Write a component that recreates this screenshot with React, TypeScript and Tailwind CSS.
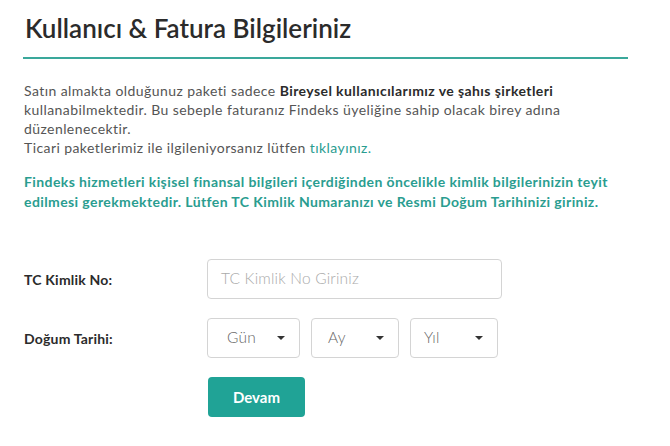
import React from "react";

const teal = "text-[#2a9d90]";

const SelectBox = ({ label, width, pl }: { label: string; width: string; pl: string }) => (
  <div
    className={`${width} ${pl} h-10 flex items-center justify-between pr-[14px] border border-[#d4d4d4] rounded-[4px] bg-white`}
  >
    <span className="text-[15.5px] text-[#666] font-light tracking-[0.3px]">{label}</span>
    <svg width="8" height="4" viewBox="0 0 8 4">
      <path d="M0 0h8L4 4z" fill="#333" />
    </svg>
  </div>
);

export default function App() {
  return (
    <div
      className="w-[670px] h-[446px] bg-white pt-[13px] pl-[23px]"
      style={{ fontFamily: "Lato, 'Noto Sans', sans-serif" }}
    >
      <h1 className="text-[26px] leading-[30px] font-semibold text-[#2b2b2b] pl-[2px]">
        Kullanıcı &amp; Fatura Bilgileriniz
      </h1>
      <div className="w-[605px] h-[2px] bg-[#3aa89b] mt-[14px]" />

      <div className="pl-[1px] w-[620px] mt-[22px] text-[14px] leading-[19px] tracking-[0.42px] text-[#555]">
        <p>
          Satın almakta olduğunuz paketi sadece{" "}
          <b className="text-[#2b2b2b]">Bireysel kullanıcılarımız ve şahıs şirketleri</b>{" "}
          kullanabilmektedir. Bu sebeple faturanız Findeks üyeliğine sahip olacak birey adına
          düzenlenecektir.
        </p>
        <p>
          Ticari paketlerimiz ile ilgileniyorsanız lütfen{" "}
          <a className={teal}>tıklayınız.</a>
        </p>
        <p className={`${teal} font-bold leading-[20px] mt-[15px] tracking-[0.4px]`}>
          Findeks hizmetleri kişisel finansal bilgileri içerdiğinden öncelikle kimlik bilgilerinizin
          teyit edilmesi gerekmektedir. Lütfen TC Kimlik Numaranızı ve Resmi Doğum Tarihinizi
          giriniz.
        </p>
      </div>

      <div className="pl-[1px] mt-[47px] flex flex-col gap-[19px]">
        <div className="flex items-center">
          <label className="w-[183px] text-[14px] font-bold text-[#2b2b2b] tracking-[0.2px]">
            TC Kimlik No:
          </label>
          <div className="w-[295px] h-10 border border-[#d4d4d4] rounded-[4px] flex items-center pl-[13px]">
            <span className="text-[15.5px] text-[#aaa] font-light tracking-[0.2px]">
              TC Kimlik No Giriniz
            </span>
          </div>
        </div>
        <div className="flex items-center">
          <label className="w-[183px] text-[14px] font-bold text-[#2b2b2b] tracking-[0.2px]">
            Doğum Tarihi:
          </label>
          <div className="flex gap-[11px]">
            <SelectBox label="Gün" width="w-[93px]" pl="pl-[19px]" />
            <SelectBox label="Ay" width="w-[88px]" pl="pl-[16px]" />
            <SelectBox label="Yıl" width="w-[88px]" pl="pl-[13px]" />
          </div>
        </div>
        <div className="pl-[184px]">
          <button className="w-[97px] h-10 rounded-[4px] bg-[#20a396] text-white text-[15px] font-bold">
            Devam
          </button>
        </div>
      </div>
    </div>
  );
}
